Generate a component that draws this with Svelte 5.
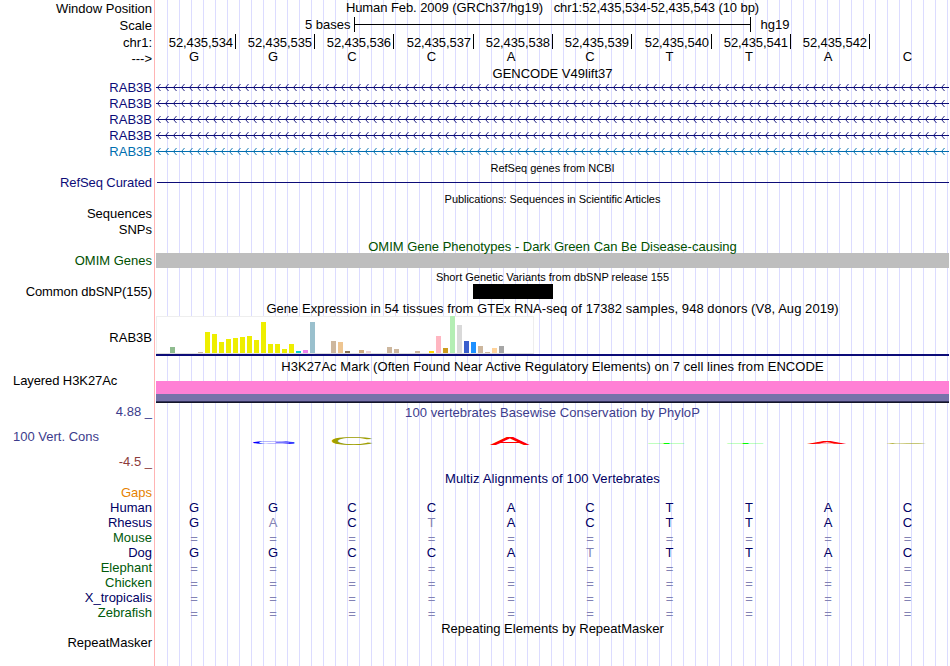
<script>
    // side labels, top to bottom. gap = empty pixels above the label
    const labels = [
        { text: "Window Position", h: 17 },
        { text: "Scale", h: 17 },
        { text: "chr1:", h: 17 },
        { text: "--->", h: 15 },
        { text: "RAB3B", h: 15, gap: 14, color: "#0c0c78" },
        { text: "RAB3B", h: 15, gap: 1, color: "#0c0c78" },
        { text: "RAB3B", h: 15, gap: 1, color: "#0c0c78" },
        { text: "RAB3B", h: 15, gap: 1, color: "#0c0c78" },
        { text: "RAB3B", h: 15, gap: 1, color: "#006eaf" },
        { text: "RefSeq Curated", h: 15, gap: 16, color: "#0c0c78", tight: true },
        { text: "Sequences", h: 15, gap: 16 },
        { text: "SNPs", h: 15, gap: 1 },
        { text: "OMIM Genes", h: 15, gap: 16, color: "#005000" },
        { text: "Common dbSNP(155)", h: 15, gap: 16, tight: true },
        { text: "RAB3B", h: 15, gap: 31 },
        { text: "Layered H3K27Ac", h: 15, gap: 28, left: true, tight: true },
        { text: "4.88 _", h: 15, gap: 16, color: "#3c3c8c" },
        { text: "100 Vert. Cons", h: 15, gap: 10, left: true, color: "#3c3c8c" },
        { text: "-4.5 _", h: 15, gap: 10, color: "#8c3c3c" },
        { text: "Gaps", h: 15, gap: 16, color: "#e68200" },
        { text: "Human", h: 15, color: "#000064" },
        { text: "Rhesus", h: 15, color: "#000064" },
        { text: "Mouse", h: 15, color: "#005a0a" },
        { text: "Dog", h: 15, color: "#000064" },
        { text: "Elephant", h: 15, color: "#005a0a" },
        { text: "Chicken", h: 15, color: "#005a0a" },
        { text: "X_tropicalis", h: 15, color: "#000064" },
        { text: "Zebrafish", h: 15, color: "#005a0a" },
        { text: "RepeatMasker", h: 15, gap: 15 }
    ];

    const positions = [534, 535, 536, 537, 538, 539, 540, 541, 542];
    const sequence = "GGCCACTTAC";

    const transcripts = ["#0c0c78", "#0c0c78", "#0c0c78", "#0c0c78", "#006eaf"];

    // one chevron every 8px, pointing to the left
    let chevrons = "";
    for (let x = 1; x < 793; x += 8) {
        chevrons += `M${x + 3.5} 4L${x + 0.5} 7.5L${x + 3.5} 11`;
    }

    // GTEx bars: [tissue slot, height, color]
    const yellow = "#eeee00";
    const tan = "#cdb79e";
    const bars = [
        [2, 6, "#8fbc8f"], [6, 1, tan],
        [7, 21, yellow], [8, 19, yellow], [9, 11, yellow], [10, 14, yellow], [11, 15, yellow],
        [12, 16, yellow], [13, 17, yellow], [14, 13, yellow], [15, 31, yellow], [16, 9, yellow],
        [17, 9, yellow], [18, 4, yellow], [19, 9, yellow],
        [20, 2, "#00cdcd"], [21, 3, "#ee82ee"], [22, 31, "#9ac0cd"],
        [25, 12, tan], [26, 11, "#eec591"], [27, 2, "#8b7355"],
        [29, 3, "#cdaa7d"], [30, 2, "#eed5d2"], [33, 6, tan], [34, 4, tan], [37, 2, tan],
        [39, 2, "#ffd700"], [40, 17, "#ffb6c1"], [41, 5, "#cd9b1d"], [42, 37, "#b4eeb4"],
        [43, 28, "#d9d9d9"], [44, 12, "#3a5fcd"], [45, 11, "#1e90ff"], [46, 7, tan],
        [47, 1, tan], [48, 5, "#ffd39b"], [49, 7, "#a6a6a6"]
    ];

    // conservation logo letters, squashed to their score
    const logo = [
        { base: "G", x: 97, y: 11, w: 43, h: 3, color: "#0000ff" },
        { base: "C", x: 176, y: 12, w: 41, h: 8, color: "#a0a000" },
        { base: "A", x: 334, y: 12, w: 40, h: 8, color: "#ff0000" },
        { base: "T", x: 492, y: 11, w: 37, h: 1, color: "#00ff00" },
        { base: "T", x: 571, y: 11, w: 37, h: 1, color: "#00ff00" },
        { base: "A", x: 651, y: 11, w: 40, h: 2, color: "#ff0000" },
        { base: "C", x: 731, y: 11, w: 40, h: 1, color: "#a0a000" }
    ];
    // glyph ink boxes in a 100px font: left, width, height
    const ink = { G: [5, 68, 72], C: [5, 64, 72], A: [0, 67, 69], T: [2, 57, 69] };

    function squash(l) {
        const [left, width, height] = ink[l.base];
        const sx = l.w / width;
        return `translate(${l.x - left * sx} ${l.y}) scale(${sx} ${l.h / height})`;
    }

    // lower case = differs from human, drawn lighter
    const alignment = [
        "GGCCACTTAC",
        "GaCtACTTAC",
        "==========",
        "GGCCAtTTAC",
        "==========",
        "==========",
        "==========",
        "=========="
    ];
</script>

<div class="browser">
    <div class="labels">
        {#each labels as l}
            <div
                class="label"
                class:left={l.left}
                class:tight={l.tight}
                style="height: {l.h}px; margin-top: {l.gap ?? 0}px; color: {l.color ?? '#000'}"
            >{l.text}</div>
        {/each}
    </div>

    <div class="tracks">
        <div class="position">Human Feb. 2009 (GRCh37/hg19) &nbsp; chr1:52,435,534-52,435,543 (10 bp)</div>

        <div class="scale">
            <span>5 bases</span>
            <div class="ruler"></div>
            <span>hg19</span>
        </div>

        <div class="bases ticks">
            {#each positions as p}
                <div>52,435,{p}</div>
            {/each}
        </div>
        <div class="bases letters ref">
            {#each sequence as b}
                <div>{b}</div>
            {/each}
        </div>

        <div class="title gencode">GENCODE V49lift37</div>
        {#each transcripts as color}
            <svg class="transcript" width="793" height="16">
                <path d={chevrons} fill="none" stroke={color} stroke-width="0.9" />
                <rect x="0" y="7" width="793" height="1" fill={color} />
            </svg>
        {/each}

        <div class="title small refseq">RefSeq genes from NCBI</div>
        <div class="refseq-line"></div>

        <div class="title small pubs">Publications: Sequences in Scientific Articles</div>

        <div class="title omim">OMIM Gene Phenotypes - Dark Green Can Be Disease-causing</div>
        <div class="omim-bar"></div>

        <div class="title small snp">Short Genetic Variants from dbSNP release 155</div>
        <div class="snp-block"></div>

        <div class="title gtex-title">Gene Expression in 54 tissues from GTEx RNA-seq of 17382 samples, 948 donors (V8, Aug 2019)</div>
        <svg class="gtex" width="793" height="40" shape-rendering="crispEdges">
            <rect x="0" y="0" width="378" height="38" fill="#eee" />
            <rect x="1" y="1" width="376" height="36" fill="#fff" />
            <rect x="0" y="37" width="378" height="1" fill="#ddd" />
            {#each bars as [slot, h, color]}
                <rect x={slot * 7} y={37 - h} width="5" height={h} fill={color} />
            {/each}
            <rect x="0" y="38" width="793" height="2" fill="#0c0c78" />
        </svg>

        <div class="title h3k">H3K27Ac Mark (Often Found Near Active Regulatory Elements) on 7 cell lines from ENCODE</div>
        <div class="h3k-band"></div>

        <div class="title phylop">100 vertebrates Basewise Conservation by PhyloP</div>
        <svg class="logo" width="793" height="16">
            {#each logo as l}
                <text transform={squash(l)} fill={l.color}>{l.base}</text>
            {/each}
        </svg>

        <div class="title multiz">Multiz Alignments of 100 Vertebrates</div>
        {#each alignment as row}
            <div class="bases letters align">
                {#each row as b}
                    <div class:diff={b === "=" || b !== b.toUpperCase()} class:gap={b === "="}>{b.toUpperCase()}</div>
                {/each}
            </div>
        {/each}

        <div class="title repeats">Repeating Elements by RepeatMasker</div>
    </div>
</div>

<style>
:global(body) {
    background: #fff;
}

.browser {
    display: flex;
    width: 950px;
    height: 666px;
    overflow: hidden;
    font-family: "Liberation Sans", Arial, sans-serif;
    font-size: 13px;
    color: #000;
    white-space: nowrap;
}

.labels {
    box-sizing: border-box;
    width: 155px;
    padding-right: 2px;
    border-right: 1px solid #ffb4b4;
}

.label {
    display: flex;
    align-items: center;
    justify-content: flex-end;
    line-height: 15px;
}

.label.left {
    justify-content: flex-start;
    padding-left: 13px;
}

.label.tight {
    letter-spacing: -0.09px;
}

.tracks {
    width: 793px;
    margin-left: 1px;
    /* light guide line every 12px */
    background: repeating-linear-gradient(to right, transparent 0 11px, #dcdcff 11px 12px);
}

.tracks svg {
    display: block;
    overflow: visible;
}

.position {
    height: 16px;
    line-height: 15px;
    text-align: center;
    letter-spacing: -0.08px;
}

.scale {
    display: flex;
    height: 18px;
    line-height: 17px;
    padding-left: 149px;
}

.ruler {
    box-sizing: border-box;
    width: 397px;
    height: 15px;
    margin: 1px 10px 0 3px;
    border-left: 1px solid #000;
    border-right: 1px solid #000;
    background: linear-gradient(#000, #000) 0 7px / 100% 1px no-repeat;
}

.bases {
    display: grid;
    grid-template-columns: 80px 79px 79px 80px 79px 79px 80px 79px 79px 79px;
}

.ticks {
    height: 15px;
    line-height: 17px;
    text-align: right;
    letter-spacing: -0.08px;
}

.ticks div {
    height: 15px;
    padding-right: 2px;
    border-right: 1px solid #000;
}

.letters {
    text-align: center;
}

.letters div {
    padding-right: 5px;
}

.letters div:first-child,
.letters div:last-child {
    padding-right: 4px;
}

.ref {
    height: 16px;
    line-height: 16px;
}

.title {
    height: 15px;
    line-height: 15px;
    text-align: center;
}

.small {
    font-size: 11px;
}

.gencode {
    padding: 1px 0 0;
    margin-bottom: -1px;
}

.transcript {
    height: 16px;
}

.refseq {
    padding-top: 1px;
}

.refseq-line {
    height: 1px;
    margin: 6px 0 9px 1px;
    background: #0c0c78;
}

.pubs {
    letter-spacing: -0.04px;
}

.omim {
    margin-top: 31px;
    padding-top: 1px;
    height: 14px;
    color: #005000;
}

.omim-bar {
    height: 15px;
    background: #bebebe;
}

.snp {
    height: 14px;
    padding-top: 2px;
}

.snp-block {
    width: 80px;
    height: 15px;
    margin-left: 317px;
    background: #000;
}

.gtex-title {
    padding: 2px 0 0;
    letter-spacing: 0.055px;
}

.h3k {
    padding-top: 3px;
    letter-spacing: 0.055px;
}

.h3k-band {
    height: 22px;
    margin-top: 7px;
    background: linear-gradient(#ff80d5 0 13px, #7873aa 13px 20px, #32325a 20px 21px, #141428 21px);
}

.phylop {
    padding-top: 2px;
    color: #3c3c8c;
    letter-spacing: 0.06px;
}

.logo {
    margin-top: 13px;
    font-size: 100px;
}

.multiz {
    margin-top: 22px;
    padding-bottom: 14px;
    color: #000064;
    letter-spacing: 0.11px;
}

.align {
    height: 15px;
    line-height: 15px;
    color: #000064;
}

.align .diff {
    color: #8282b4;
}

.align .gap {
    line-height: 17px;
}

.repeats {
    padding-top: 1px;
}
</style>
